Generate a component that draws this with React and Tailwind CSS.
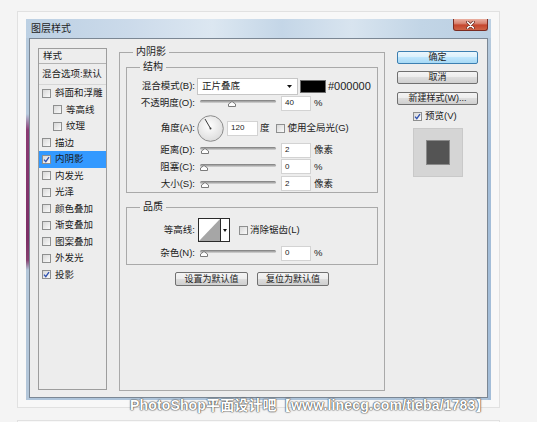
import React from "react";

function Check({ checked, className = "" }) {
  return (
    <span
      className={`inline-flex items-center justify-center w-[9px] h-[9px] shrink-0 border border-[#8e8f8f] bg-linear-to-br from-[#d8d8d8] to-[#fafafa] ${className}`}
    >
      {checked && (
        <svg width="7" height="7" viewBox="0 0 7 7">
          <path d="M1 3.6 L2.8 5.6 L6 1.2" stroke="#2f52b0" strokeWidth="1.4" fill="none" />
        </svg>
      )}
    </span>
  );
}

function Item({ label, checked, sub, active }) {
  return (
    <div
      className={`h-[16.5px] flex items-center whitespace-nowrap ${sub ? "pl-[14px]" : "pl-[3px]"} ${active ? "bg-[#3399ff]" : ""}`}
    >
      <Check checked={checked} />
      <span className="ml-[4px]">{label}</span>
    </div>
  );
}

function StyleList() {
  const items = [
    { label: "斜面和浮雕" },
    { label: "等高线", sub: true },
    { label: "纹理", sub: true },
    { label: "描边" },
    { label: "内阴影", checked: true, active: true },
    { label: "内发光" },
    { label: "光泽" },
    { label: "颜色叠加" },
    { label: "渐变叠加" },
    { label: "图案叠加" },
    { label: "外发光" },
    { label: "投影", checked: true },
  ];
  return (
    <div className="mt-[3px] w-[69px] h-[342px] shrink-0 border border-[#9d9d9d] text-[9.5px] leading-[14px] overflow-hidden">
      <div className="h-[15px] border-b border-[#b3b3b3] pl-[4px] flex items-center">样式</div>
      <div className="h-[21px] border-b border-[#d6d6d6] pl-[3px] flex items-center whitespace-nowrap">混合选项:默认</div>
      {items.map((it) => (
        <Item key={it.label} {...it} />
      ))}
    </div>
  );
}

function Slider({ pos }) {
  return (
    <div className="relative ml-[5px] w-[76px] h-[10px] shrink-0">
      <div className="absolute left-0 right-0 top-[2px] h-[3px] rounded-full bg-linear-to-b from-[#7a7a7a] to-[#d8d8d8]" />
      <svg className="absolute top-[3px]" style={{ left: pos }} width="8" height="6" viewBox="0 0 8 6">
        <path d="M4 0.5 L7.5 3 V5.5 H0.5 V3 Z" fill="#fdfdfd" stroke="#7a7a7a" strokeWidth="1" />
      </svg>
    </div>
  );
}

function Num({ v, className = "" }) {
  return (
    <div
      className={`h-[15px] bg-white border border-[#d3d3d3] pl-[3px] flex items-center text-[8px] leading-none shrink-0 ${className}`}
    >
      {v}
    </div>
  );
}

function Label({ children }) {
  return <div className="w-[68px] shrink-0 text-right whitespace-nowrap">{children}</div>;
}

function SliderRow({ label, pos, value, unit, h }) {
  return (
    <div className={`flex items-center ${h}`}>
      <Label>{label}</Label>
      <Slider pos={pos} />
      <Num v={value} className="ml-[5px] w-[30px]" />
      <span className="ml-[3px] whitespace-nowrap">{unit}</span>
    </div>
  );
}

function Dial() {
  return (
    <svg className="ml-[2px] shrink-0" width="27" height="27" viewBox="0 0 27 27">
      <defs>
        <radialGradient id="dialg" cx="45%" cy="40%" r="65%">
          <stop offset="0" stopColor="#ffffff" />
          <stop offset="1" stopColor="#dadada" />
        </radialGradient>
      </defs>
      <circle cx="13.5" cy="13.5" r="12.8" fill="url(#dialg)" stroke="#8c8c8c" strokeWidth="1" />
      <line x1="13.5" y1="13.5" x2="8" y2="4" stroke="#3a3a3a" strokeWidth="1" />
      <circle cx="13.5" cy="13.5" r="1" fill="#3a3a3a" />
    </svg>
  );
}

function Contour() {
  return (
    <div className="ml-[3px] flex h-[24px] border border-[#2a2a2a] shrink-0">
      <svg width="21" height="22" viewBox="0 0 21 22" className="block">
        <rect x="0" y="0" width="21" height="22" fill="#ffffff" />
        <polygon points="0,22 21,0 21,22" fill="#a6a6a6" />
      </svg>
      <div className="w-[9px] h-full border-l border-[#2a2a2a] bg-white flex items-center justify-center">
        <svg width="4" height="3" viewBox="0 0 4 3">
          <path d="M0 0 H4 L2 3 Z" fill="#111" />
        </svg>
      </div>
    </div>
  );
}

function Btn({ children, primary, className = "" }) {
  return (
    <div
      className={`h-[13px] flex items-center justify-center rounded-[2px] border text-[9px] leading-none whitespace-nowrap ${
        primary
          ? "border-[#3c7fb1] bg-[linear-gradient(180deg,#eaf6fd_0%,#d9f0fc_49%,#bee6fd_50%,#a7d9f5_100%)]"
          : "border-[#707070] bg-[linear-gradient(180deg,#f4f4f4_0%,#ececec_49%,#dddddd_50%,#cfcfcf_100%)]"
      } ${className}`}
    >
      {children}
    </div>
  );
}

function MainPanel() {
  return (
    <fieldset className="ml-[12px] w-[266px] h-[346px] shrink-0 border border-[#a9a9a9] text-[9.5px] leading-[14px]">
      <legend className="ml-[13px] px-[3px] text-[10px] leading-[14px]">内阴影</legend>
      <div className="px-[6px]">
        <fieldset className="mt-[1px] border border-[#a9a9a9]">
          <legend className="ml-[13px] px-[3px] text-[10px] leading-[14px]">结构</legend>
          <div className="mt-[3px] h-[18px] flex items-center">
            <Label>混合模式(B):</Label>
            <div className="ml-[2px] w-[101px] h-[17px] shrink-0 bg-white border border-[#c6c6c6] flex items-center justify-between pl-[4px] pr-[5px]">
              <span>正片叠底</span>
              <svg width="5" height="3" viewBox="0 0 5 3">
                <path d="M0 0 H5 L2.5 3 Z" fill="#111" />
              </svg>
            </div>
            <div className="ml-[2px] w-[26px] h-[13px] shrink-0 bg-black border border-[#6e6e6e]" />
            <span className="ml-[2px] text-[11px] text-[#222]">#000000</span>
          </div>
          <SliderRow label="不透明度(O):" pos={28} value="40" unit="%" h="h-[16px]" />
          <div className="mt-[3px] h-[28px] flex items-center">
            <Label>角度(A):</Label>
            <Dial />
            <Num v="120" className="ml-[3px] w-[31px]" />
            <span className="ml-[2px]">度</span>
            <Check className="ml-[6px]" />
            <span className="ml-[3px] whitespace-nowrap">使用全局光(G)</span>
          </div>
          <SliderRow label="距离(D):" pos={1} value="2" unit="像素" h="h-[16px]" />
          <SliderRow label="阻塞(C):" pos={0} value="0" unit="%" h="h-[17px]" />
          <SliderRow label="大小(S):" pos={1} value="2" unit="像素" h="h-[17px]" />
        </fieldset>

        <fieldset className="mt-[7px] border border-[#a9a9a9] pb-[3px]">
          <legend className="ml-[13px] px-[3px] text-[10px] leading-[14px]">品质</legend>
          <div className="mt-[2px] h-[28px] flex items-center">
            <Label>等高线:</Label>
            <Contour />
            <Check className="ml-[9px]" />
            <span className="ml-[2px] whitespace-nowrap">消除锯齿(L)</span>
          </div>
          <div className="mt-[1px]">
            <SliderRow label="杂色(N):" pos={0} value="0" unit="%" h="h-[16px]" />
          </div>
        </fieldset>

        <div className="mt-[7px] flex justify-center gap-[9px]">
          <Btn className="w-[73px] h-[14px]">设置为默认值</Btn>
          <Btn className="w-[72px] h-[14px]">复位为默认值</Btn>
        </div>
      </div>
    </fieldset>
  );
}

function RightPanel() {
  return (
    <div className="ml-[12px] mt-[6px] w-[81px] shrink-0 flex flex-col text-[9.5px] leading-[14px]">
      <Btn primary>确定</Btn>
      <Btn className="mt-[7px]">取消</Btn>
      <Btn className="mt-[8px]">新建样式(W)...</Btn>
      <div className="mt-[4px] ml-[16px] h-[14px] flex items-center">
        <Check checked />
        <span className="ml-[3px] whitespace-nowrap">预览(V)</span>
      </div>
      <div className="mt-[5px] ml-[16px] w-[50px] h-[49px] bg-[#d5d5d5] border border-[#c9c9c9] flex items-center justify-center">
        <div className="w-[24px] h-[25px] bg-[#545454] border border-[#8a8a8a]" />
      </div>
    </div>
  );
}

function CloseBtn() {
  return (
    <div className="mr-[3px] w-[35px] h-[12px] rounded-b-[3px] border border-t-0 border-[#7a2c22] bg-[linear-gradient(180deg,#eab0a2_0%,#d88370_40%,#c5462e_55%,#cf6446_100%)] flex items-center justify-center">
      <svg width="9" height="8" viewBox="0 0 9 8">
        <path d="M1.5 1 L7.5 7 M7.5 1 L1.5 7" stroke="#6b2a20" strokeWidth="3" strokeLinecap="round" />
        <path d="M1.5 1 L7.5 7 M7.5 1 L1.5 7" stroke="#ffffff" strokeWidth="1.6" strokeLinecap="round" />
      </svg>
    </div>
  );
}

function Window() {
  return (
    <div className="w-[465px] h-[381px] flex flex-col">
      <div className="h-[19px] flex justify-between items-start bg-[linear-gradient(90deg,#bcd0e3_0%,#cbdaea_22%,#dce7f1_40%,#c4d6e7_55%,#d8e4ef_70%,#c2d5e6_85%,#bbcfe2_100%)]">
        <span className="pl-[5px] pt-[3px] text-[10px] leading-[14px] text-[#1e1e1e]">图层样式</span>
        <CloseBtn />
      </div>
      <div className="flex-1 flex">
        <div className="w-[3px] bg-[linear-gradient(180deg,#b6cadd_0px,#b6cadd_76px,#8a3b73_92px,#7c2f66_200px,#86406f_222px,#b3c6d9_232px,#b3c6d9_100%)]" />
        <div className="flex-1 flex flex-col">
          <div className="flex-1 border border-[#7b8794] bg-[#ededed] flex items-start pt-[6px] pl-[8px] text-[#1b1b1b]">
            <StyleList />
            <MainPanel />
            <RightPanel />
          </div>
          <div className="h-[2px] bg-[#aec4da]" />
        </div>
        <div className="w-[3px] bg-[linear-gradient(180deg,#b5c9dc_0%,#a3bdd8_30%,#a3bdd8_100%)]" />
      </div>
    </div>
  );
}

export default function App() {
  return (
    <div className="relative w-[537px] h-[422px] overflow-hidden bg-[#f4f4f4] pt-[11px] pl-[17px] font-['Liberation_Sans','Noto_Sans_CJK_SC',sans-serif] text-[#1b1b1b]">
      <div className="w-[483px] h-[397px] border border-[#e1e1e1] bg-[#f8f8f8] pt-[7px] pl-[8px]">
        <Window />
      </div>
      <div className="mt-[12px] w-[483px] h-[10px] border border-[#e1e1e1] bg-[#f8f8f8]" />
      <div className="absolute left-[130px] top-[397px] text-[14px] font-bold leading-[16px] tracking-[0.15px] text-white whitespace-nowrap [text-shadow:0_0_1px_#444,0_0_1px_#444,0_0_2px_#666]">
        PhotoShop平面设计吧【www.linecg.com/tieba/1783】
      </div>
    </div>
  );
}
